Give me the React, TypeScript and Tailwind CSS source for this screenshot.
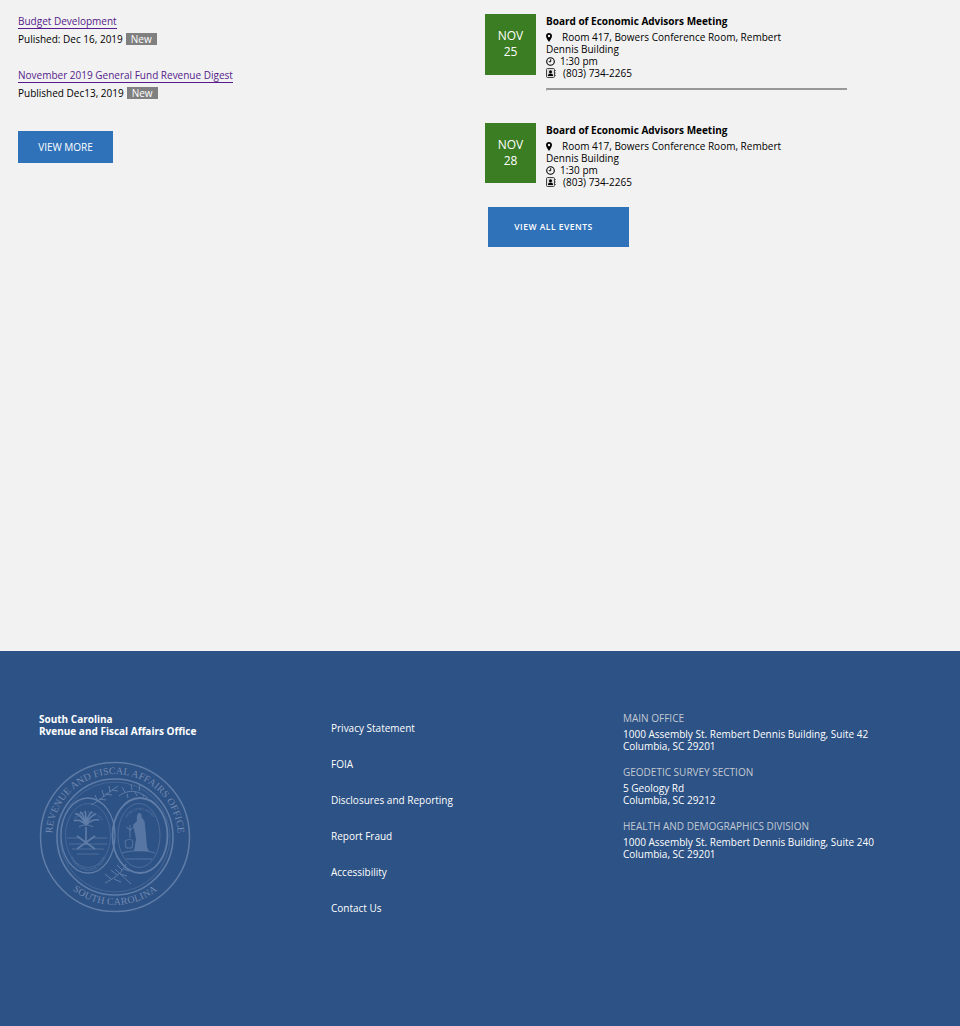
import React from "react";

const font = { fontFamily: '"Open Sans", sans-serif' };

function Pin() {
  return (
    <svg width="6" height="9" viewBox="0 0 6 9" className="inline-block shrink-0 align-[-1px]">
      <path d="M3 0C1.3 0 0 1.3 0 3c0 1.8 2.2 4.6 3 6 .8-1.4 3-4.2 3-6 0-1.7-1.3-3-3-3zm0 4.2a1.2 1.2 0 110-2.4 1.2 1.2 0 010 2.4z" fill="#000" />
    </svg>
  );
}
function Clock() {
  return (
    <svg width="9" height="9" viewBox="0 0 9 9" className="shrink-0">
      <circle cx="4.5" cy="4.5" r="3.8" fill="none" stroke="#000" strokeWidth="1.1" />
      <path d="M4.7 2.2v2.5H2.8" fill="none" stroke="#000" strokeWidth="1" />
    </svg>
  );
}
function Contact() {
  return (
    <svg width="10" height="10" viewBox="0 0 10 10" className="shrink-0">
      <rect x="0.5" y="0.5" width="8" height="9" rx="1" fill="#ddd" stroke="#444" strokeWidth="1" />
      <circle cx="4.5" cy="3.8" r="1.5" fill="#000" />
      <path d="M2 8c0-2 1-2.6 2.5-2.6S7 6 7 8z" fill="#000" />
      <path d="M9.2 2.5h.8M9.2 5h.8M9.2 7.5h.8" stroke="#333" strokeWidth="0.8" />
    </svg>
  );
}

function Event({ day, h, divider }: { day: string; h: string; divider?: boolean }) {
  return (
    <div className="flex">
      <div className={`flex w-[51px] shrink-0 flex-col items-center justify-center bg-[#3a7d23] text-[12px] font-medium leading-4 text-white ${h}`}>
        <span>NOV</span>
        <span>{day}</span>
      </div>
      <div className="ml-[10px] w-[301px] text-[10px] leading-3 text-black">
        <div className="font-bold leading-[14px]">Board of Economic Advisors Meeting</div>
        <div className="mt-[3px] w-[240px]">
          <Pin />
          <span className="ml-[10px]">Room 417, Bowers Conference Room, Rembert Dennis Building</span>
        </div>
        <div className="flex items-center gap-[5px]">
          <Clock />
          <span>1:30 pm</span>
        </div>
        <div className="flex items-center gap-[7px]">
          <Contact />
          <span>(803) 734-2265</span>
        </div>
        {divider && <div className="mt-[9px] h-[3px] border-l border-t-2 border-l-[#bbb] border-t-[#999]" />}
      </div>
    </div>
  );
}

function Seal() {
  const c = "#5f7da8";
  const t = "#7189b1";
  const serif = "'Liberation Serif', serif";
  return (
    <svg width="152" height="152" viewBox="0 0 152 152" className="mt-[24px]" fill="none" stroke={c}>
      <circle cx="76" cy="76" r="74.5" strokeWidth="1.5" />
      <circle cx="76" cy="76" r="58" strokeWidth="1.6" />
      <circle cx="76" cy="76" r="55" strokeWidth="0.7" opacity="0.7" />
      <defs>
        <path id="sealTop" d="M13.5 84A63 63 0 11138.5 84" />
        <path id="sealBottom" d="M16 108A68 68 0 00136 108" />
        <path id="leftTop" d="M30 80A19 28 0 0168 80" />
        <path id="leftBottom" d="M28 80A21 30 0 0070 80" />
        <path id="rightTop" d="M82 76A19 27 0 01120 76" />
      </defs>
      <text fill={t} stroke="none" fontFamily={serif} fontSize="10" letterSpacing="0.12">
        <textPath href="#sealTop" startOffset="50%" textAnchor="middle">REVENUE AND FISCAL AFFAIRS OFFICE</textPath>
      </text>
      <text fill={t} stroke="none" fontFamily={serif} fontSize="10" letterSpacing="0.3">
        <textPath href="#sealBottom" startOffset="50%" textAnchor="middle">SOUTH CAROLINA</textPath>
      </text>
      <text fill={c} stroke="none" fontFamily={serif} fontSize="3.6">
        <textPath href="#leftTop" startOffset="50%" textAnchor="middle">SOUTH CAROLINA</textPath>
      </text>
      <text fill={c} stroke="none" fontFamily={serif} fontSize="3.6">
        <textPath href="#leftBottom" startOffset="50%" textAnchor="middle">ANIMIS OPIBUSQUE PARATI</textPath>
      </text>
      <text fill={c} stroke="none" fontFamily={serif} fontSize="3.6">
        <textPath href="#rightTop" startOffset="50%" textAnchor="middle">DUM SPIRO SPERO</textPath>
      </text>
      <ellipse cx="49" cy="74.5" rx="27" ry="37.5" strokeWidth="1.3" />
      <ellipse cx="49" cy="74.5" rx="22.5" ry="32" strokeWidth="0.5" />
      <ellipse cx="101" cy="74.5" rx="27.5" ry="37.5" strokeWidth="1.8" />
      <ellipse cx="100" cy="74.5" rx="21" ry="32" strokeWidth="0.6" />
      <path d="M47 66V84" strokeWidth="1.6" />
      <path d="M47 64C43 56 40 52 36 53M47 64c-1-7-3-11-6-13M47 64c0-7 0-11-1-14M47 64c1-7 3-11 6-13M47 64c3-7 6-10 10-11M47 64c4-4 8-6 13-5M47 64c-4-4-8-6-12-4" strokeWidth="1.6" />
      <path d="M40 66c3-2 5-2 7-2s4 0 7 2" strokeWidth="1" />
      <path d="M38 88l18-13M56 88L38 75" strokeWidth="1.6" />
      <path d="M28 77h12M54 77h14M30 83h38M33 88h32M38 93h22" strokeWidth="0.7" />
      <path d="M100 52c2.200 0 3 2 2.500 4l3 4 1.500 14 1 12 2 4H95l2-12-2-10-1-4 4-4c-.500-3 0-8 2-8z" fill={c} stroke="none" opacity="0.85" />
      <path d="M91 64v13M87 66l4 3 4-3" strokeWidth="0.9" />
      <path d="M86 80c3-2 6-2 8 0l-1 7h-6zM83 92c9-3 25-3 33 0M87 98h26" strokeWidth="0.8" />
      <path d="M52 44c8-4 15-11 27-19M59 41l-3-7M65 36l-2-7M71 31l-1-6M60 38l7 1M66 33l7 1M73 29l6 1" strokeWidth="1" />
      <path d="M80 35c8-6 18-7 29 2M86 31l-3-5M93 29l-1-6M100 30l1-6M88 33l1 4M96 31l2 4M103 33l2 3" strokeWidth="1" />
      <path d="M66 122c7-4 16-8 21-19M72 118l-6-5M78 114l-6-5M83 109l-5-5M75 118l7 3M81 113l7 2M85 108l5 2M76 108l16 15" strokeWidth="1" />
    </svg>
  );
}

const links = ["Privacy Statement", "FOIA", "Disclosures and Reporting", "Report Fraud", "Accessibility", "Contact Us"];
const offices = [
  ["MAIN OFFICE", "1000 Assembly St. Rembert Dennis Building, Suite 42", "Columbia, SC 29201"],
  ["GEODETIC SURVEY SECTION", "5 Geology Rd", "Columbia, SC 29212"],
  ["HEALTH AND DEMOGRAPHICS DIVISION", "1000 Assembly St. Rembert Dennis Building, Suite 240", "Columbia, SC 29201"],
];

export default function App() {
  return (
    <div style={font} className="w-[960px] bg-[#f2f2f2]">
      <main className="flex h-[651px]">
        <section className="w-[485px] pl-[18px] pt-[14px] text-[10px] text-black">
          <a className="block w-fit border-b border-[#551a8b] text-[#551a8b] leading-[14px]">Budget Development</a>
          <div className="mt-[3px] flex items-center leading-[14px]">
            Pulished: Dec 16, 2019
            <span className="ml-[3px] bg-[#808080] px-[5px] font-medium leading-3 text-white">New</span>
          </div>
          <a className="mt-[22px] block w-fit border-b border-[#551a8b] text-[#551a8b] leading-[14px]">November 2019 General Fund Revenue Digest</a>
          <div className="mt-[3px] flex items-center leading-[14px]">
            Published Dec13, 2019
            <span className="ml-[3px] bg-[#808080] px-[5px] font-medium leading-3 text-white">New</span>
          </div>
          <div className="mt-[31px] flex h-8 w-[95px] items-center justify-center bg-[#2f72b9] text-[10px] font-medium text-white">VIEW MORE</div>
        </section>
        <section className="pt-[14px]">
          <Event day="25" h="h-[61px] pb-[2px]" divider />
          <div className="mt-[32px]">
            <Event day="28" h="h-[60px]" />
          </div>
          <div className="ml-[3px] mt-[19px] flex h-10 w-[141px] items-center justify-center bg-[#2f72b9] pr-[10px] text-[8.5px] font-semibold tracking-[0.5px] text-white">VIEW ALL EVENTS</div>
        </section>
      </main>
      <footer className="flex h-[375px] bg-[#2d5285] pl-[39px] pt-[62px] text-[10px] text-white">
        <div className="w-[292px]">
          <div className="font-bold leading-3">South Carolina<br />Rvenue and Fiscal Affairs Office</div>
          <Seal />
        </div>
        <nav className="flex w-[292px] flex-col gap-6 pt-[9px] leading-3">
          {links.map((l) => <a key={l}>{l}</a>)}
        </nav>
        <div className="-mt-px leading-3">
          {offices.map((o) => (
            <div key={o[0]} className="mb-[14px]">
              <div className="mb-[4px] text-[#c3c9d3] leading-3">{o[0]}</div>
              <div>{o[1]}</div>
              <div>{o[2]}</div>
            </div>
          ))}
        </div>
      </footer>
    </div>
  );
}
